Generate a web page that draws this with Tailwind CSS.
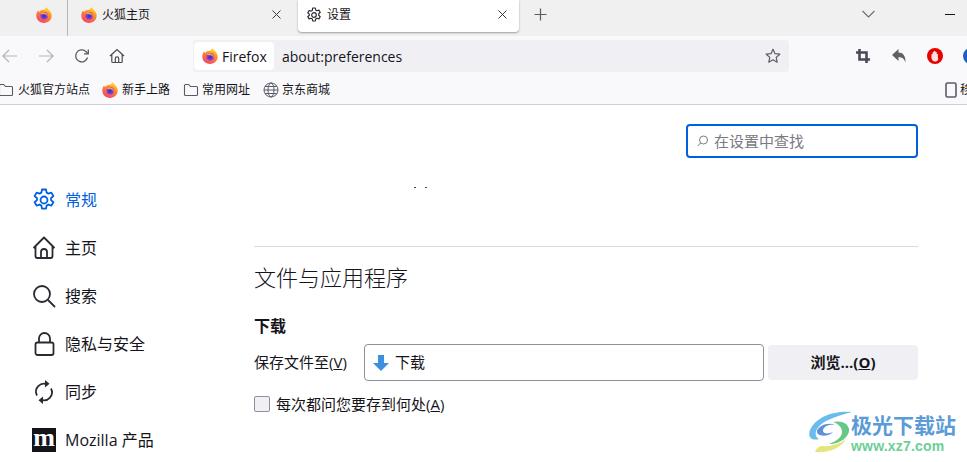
<!DOCTYPE html>
<html lang="zh-CN">
<head>
  <meta charset="UTF-8" />
  <title>设置</title>
  <script src="https://cdn.jsdelivr.net/npm/@tailwindcss/browser@4"></script>
</head>
<body class="relative w-[967px] h-[462px] overflow-hidden bg-white text-[#15141a] font-['Open_Sans','Noto_Sans_CJK_SC',sans-serif]">
  <svg class="absolute w-0 h-0">
    <defs>
      <linearGradient id="fxg" x1="0.75" y1="0" x2="0.25" y2="1">
        <stop offset="0" stop-color="#ffd23c"/><stop offset="0.4" stop-color="#ff8a2a"/><stop offset="1" stop-color="#f5406a"/>
      </linearGradient>
      <symbol id="fx" viewBox="0 0 16 16">
        <path d="M10.600 .2c.2 1.500 1.700 2 2.800 3.400 1.300 1.500 2.300 3.200 2.300 5 0 4.200-3.400 7.400-7.700 7.400S.3 12.800.3 8.600C.3 6.600 1 4.700 2.200 3.400c.2.800.5 1.300 1 1.600C4.400 3.500 6.300 2.700 8 2.900 8.900 2.200 10.100 1.500 10.600 .2z" fill="url(#fxg)"/>
        <path d="M10.600 .2c.2 1.500 1.700 2 2.800 3.400.9 1 1.600 2.200 2 3.400-1.200-1.900-3-3-5-3.400-.9-.2-1.700-.4-2.400-.7.900-.7 2.100-1.400 2.600-2.700z" fill="#ffc928"/>
        <circle cx="8.200" cy="8.700" r="3.700" fill="#7a3fe0"/>
        <path d="M4.200 6.200c1.800-1.300 4.800-1.300 6.500.3 1 1 1.500 2.300 1.300 3.500-.6-1.800-1.900-2.800-3.700-2.800-1.500 0-3.100-.1-4.100-1z" fill="#ffa030"/>
        <circle cx="8.100" cy="9.100" r="1.700" fill="#4a2fb5"/>
      </symbol>
      <symbol id="folder" viewBox="0 0 16 16">
        <path d="M1.500 12.500v-9a1 1 0 0 1 1-1h3.200l1.800 2h6a1 1 0 0 1 1 1v7a1 1 0 0 1-1 1h-11a1 1 0 0 1-1-1z" fill="none" stroke="#5b5b66" stroke-width="1.100"/>
      </symbol>
    </defs>
  </svg>

  <!-- 标签栏 -->
  <div class="flex h-[36px] bg-[#f0f0f0]">
    <div class="w-[68px] flex items-center justify-end pr-[15px] pb-[7px] border-r border-[#b8b8b8]">
      <svg class="w-4 h-4"><use href="#fx"/></svg>
    </div>
    <div class="w-[230px] flex items-center pl-[13px] pr-[17px] pb-[7px] text-[12px]">
      <svg class="w-4 h-4 mr-[5px]"><use href="#fx"/></svg>
      <span class="flex-1">火狐主页</span>
      <svg class="w-[9px] h-[9px]" viewBox="0 0 9 9" fill="none" stroke="#3b3b42" stroke-width="1"><path d="M.5.500l8 8M8.500.500l-8 8"/></svg>
    </div>
    <div class="w-[221px] h-[32px] flex items-center pl-[8px] pr-[12px] pb-[3px] text-[12px] bg-white rounded-b-[4px] shadow-[0_1px_2px_rgba(0,0,0,0.35)]">
      <svg class="w-4 h-4 mr-[5px]" viewBox="0 0 16 16" fill="none" stroke="#2b2a33" stroke-width="1.200"><circle cx="8" cy="8" r="2.300"/><path d="M6.700 1h2.600l.4 2 1.200.7 2-.6 1.300 2.200-1.500 1.400v1.600l1.500 1.400-1.300 2.200-2-.6-1.200.7-.4 2H6.700l-.4-2-1.200-.7-2 .6-1.300-2.200 1.500-1.400V7.100L1.800 5.700l1.300-2.200 2 .6 1.200-.7z" stroke-linejoin="round"/></svg>
      <span class="flex-1">设置</span>
      <svg class="w-[9px] h-[9px]" viewBox="0 0 9 9" fill="none" stroke="#3b3b42" stroke-width="1"><path d="M.5.500l8 8M8.500.500l-8 8"/></svg>
    </div>
    <div class="flex-1 flex items-center pl-[15px] pb-[8px]">
      <svg class="w-[13px] h-[13px] shrink-0" viewBox="0 0 13 13" stroke="#5b5b66" stroke-width="1.200"><path d="M6.500.5v12M.5 6.500h12"/></svg>
      <svg class="w-[13px] h-[8px] ml-[315px] shrink-0" viewBox="0 0 13 8" fill="none" stroke="#6a6a70" stroke-width="1.100"><path d="M.5 1l6 6 6-6"/></svg>
      <div class="w-[10px] h-px bg-[#15141a] ml-[70px] shrink-0"></div>
    </div>
  </div>

  <!-- 工具栏 -->
  <div class="h-[69px] pt-[4px] bg-[#f9f9fb] border-b border-[#cfcfd8] overflow-hidden">
    <div class="flex items-center h-[32px]">
      <svg class="w-[16px] h-[16px] ml-[2px] shrink-0" viewBox="0 0 16 16" fill="none" stroke="#b4b4bb" stroke-width="1.200"><path d="M15 8H1M7 2 1 8l6 6"/></svg>
      <svg class="w-[16px] h-[16px] ml-[20px] shrink-0" viewBox="0 0 16 16" fill="none" stroke="#b4b4bb" stroke-width="1.200"><path d="M1 8h14M9 2l6 6-6 6"/></svg>
      <svg class="w-[16px] h-[16px] ml-[20px] shrink-0" viewBox="0 0 16 16" fill="none" stroke="#5b5b66" stroke-width="1.300"><path d="M13.500 9.500A6 6 0 1 1 11.500 3.200L14 5.500"/><path d="M14.300 1.500v4.300H10" /></svg>
      <svg class="w-[16px] h-[16px] ml-[19px] shrink-0" viewBox="0 0 16 16" fill="none" stroke="#4a4a52" stroke-width="1.200"><path d="M1 8 8 1.500 15 8M2.800 6.500v7a1 1 0 0 0 1 1h8.400a1 1 0 0 0 1-1v-7M6.300 14.500v-4a1.700 1.700 0 0 1 3.400 0v4"/></svg>
      <div class="ml-[68px] w-[596px] h-[32px] flex items-center shrink-0 bg-[#f0f0f4] rounded-[4px] text-[14px]">
        <div class="flex items-center h-[28px] ml-[1px] w-[80px] pl-[8px] bg-white rounded-[4px]">
          <svg class="w-4 h-4 mr-[4px]"><use href="#fx"/></svg>Firefox
        </div>
        <span class="ml-[8px] flex-1">about:preferences</span>
        <svg class="w-[16px] h-[16px] mr-[8px]" viewBox="0 0 16 16" fill="none" stroke="#5b5b66" stroke-width="1.200" stroke-linejoin="round"><path d="m8 1.200 2 4.500 4.800.5-3.600 3.200 1 4.800L8 11.800l-4.200 2.400 1-4.800L1.200 6.200 6 5.700z"/></svg>
      </div>
      <svg class="w-[14px] h-[14px] ml-[67px] shrink-0" viewBox="0 0 14 14" fill="none" stroke="#4a4a55" stroke-width="2.600"><path d="M3.500 0v10.500H14M0 3.500h10.500V14"/></svg>
      <svg class="w-[14px] h-[14px] ml-[22px] shrink-0" viewBox="0 0 14 14" fill="#5f5f68"><path d="M6.500 0v3.600c4.300.1 7.300 3 7 9.900C12.400 10.300 10.500 8 6.500 8.300V12L0 6z"/></svg>
      <svg class="w-[16px] h-[16px] ml-[21px] shrink-0" viewBox="0 0 16 16"><circle cx="8" cy="8" r="8" fill="#e60000"/><path d="M4.500 8V6.500c0-1 1-1 1.200-.2V4.400c0-1 1.200-1 1.300 0V3.500c0-1 1.300-1 1.400 0v.9c0-1 1.300-1 1.300 0v2c0-.8 1.200-.8 1.200.1v3C11.900 12 10.200 13.500 8 13.500 6 13.500 5 12 4.500 10.500z" fill="#fbe3e3"/></svg>
      <div class="ml-[20px] w-[16px] h-[16px] rounded-full border-[4px] border-[#1f5fbf] bg-white shrink-0"></div>
    </div>

    <div class="flex items-center h-[28px] mt-[4px] text-[12px] whitespace-nowrap">
      <svg class="w-[16px] h-[16px] -ml-[2px] mr-[4px] shrink-0"><use href="#folder"/></svg>
      <span>火狐官方站点</span>
      <svg class="w-4 h-4 ml-[12px] mr-[4px] shrink-0"><use href="#fx"/></svg>
      <span>新手上路</span>
      <svg class="w-[16px] h-[16px] ml-[13px] mr-[3px] shrink-0"><use href="#folder"/></svg>
      <span>常用网址</span>
      <svg class="w-[16px] h-[16px] ml-[13px] mr-[3px] shrink-0" viewBox="0 0 16 16" fill="none" stroke="#5b5b66" stroke-width="1"><circle cx="8" cy="8" r="7"/><ellipse cx="8" cy="8" rx="3" ry="7"/><path d="M1 8h14M2 4.500h12M2 11.500h12"/></svg>
      <span>京东商城</span>
      <svg class="w-[12px] h-[16px] ml-[615px] mr-[3px] shrink-0" viewBox="0 0 12 16" fill="none" stroke="#5b5b66" stroke-width="1.600"><rect x="1" y="1" width="10" height="14" rx="1.500"/></svg>
      <span>移动设备</span>
    </div>
  </div>

  <!-- 设置页 -->
  <div class="flex">
    <nav class="w-[254px] pl-[32px] pt-[71px] text-[16px] shrink-0">
      <div class="flex items-center h-[48px] text-[#0061e0]">
        <svg class="w-[24px] h-[24px] mr-[9px]" viewBox="0 0 24 24" fill="none" stroke="#0061e0" stroke-width="1.800" stroke-linejoin="round"><circle cx="12" cy="12" r="3.500"/><path d="M10 1.500h4l.6 3.100 1.800 1 3-1 2 3.400-2.400 2.100v2l2.400 2.100-2 3.400-3-1-1.800 1-.6 3.100h-4l-.6-3.100-1.800-1-3 1-2-3.400 2.400-2.100v-2L2.600 8l2-3.400 3 1 1.800-1z"/></svg>
        常规
      </div>
      <div class="flex items-center h-[48px]">
        <svg class="w-[24px] h-[24px] mr-[9px]" viewBox="0 0 24 24" fill="none" stroke="#2b2a33" stroke-width="1.800" stroke-linejoin="round"><path d="M1.500 12 12 1.500 22.500 12M3.500 10v10a2 2 0 0 0 2 2h13a2 2 0 0 0 2-2V10M9 22v-6a3 3 0 0 1 6 0v6"/></svg>
        主页
      </div>
      <div class="flex items-center h-[48px]">
        <svg class="w-[24px] h-[24px] mr-[9px]" viewBox="0 0 24 24" fill="none" stroke="#2b2a33" stroke-width="1.800"><circle cx="10" cy="10" r="8"/><path d="m16 16 7 7"/></svg>
        搜索
      </div>
      <div class="flex items-center h-[48px]">
        <svg class="w-[24px] h-[24px] mr-[9px]" viewBox="0 0 24 24" fill="none" stroke="#2b2a33" stroke-width="1.800"><rect x="3.500" y="10.500" width="18" height="12.500" rx="2"/><path d="M7 10.500V6.500a5.500 5.500 0 0 1 11 0v4"/></svg>
        隐私与安全
      </div>
      <div class="flex items-center h-[48px]">
        <svg class="w-[24px] h-[24px] mr-[9px]" viewBox="0 0 24 24" fill="none" stroke="#2b2a33" stroke-width="1.800"><path d="M5 15.500A8 8 0 0 1 15.500 4.500M19 8.500A8 8 0 0 1 8.500 19.500"/><path d="M13 0v7.500l4.500-3.700zM11 24v-7.500l-4.500 3.700z" fill="#2b2a33" stroke="none"/></svg>
        同步
      </div>
      <div class="flex items-center h-[48px]">
        <div class="w-[24px] h-[24px] mr-[9px] flex items-center justify-center bg-[#15141a] text-white font-['Liberation_Serif',serif] font-bold text-[26px] leading-[22px] pb-[5px]">m</div>
        Mozilla 产品
      </div>
    </nav>

    <main class="w-[664px]">
      <div class="flex justify-end pt-[19px]">
        <div class="w-[232px] h-[34px] flex items-center pl-[9px] border-2 border-[#0061e0] rounded-[4px] text-[15px] text-[#7a7a82]">
          <svg class="w-[12px] h-[12px] mr-[5px]" viewBox="0 0 12 12" fill="none" stroke="#7a7a82" stroke-width="1"><circle cx="6.500" cy="5" r="4"/><path d="M3.500 8 .8 11"/></svg>
          在设置中查找
        </div>
      </div>
      <div class="h-[89px] pt-[29px] pl-[160px] flex items-start gap-[9px] border-b border-[#d8d8dd]">
        <div class="w-[2px] h-px bg-[#3b3b42]"></div>
        <div class="w-[2px] h-px bg-[#3b3b42]"></div>
      </div>
      <h1 class="mt-[14px] text-[22px] leading-[32px] font-light">文件与应用程序</h1>
      <h2 class="mt-[21px] text-[16px] leading-[24px] font-bold">下载</h2>
      <div class="flex items-center mt-[6px] text-[15px]">
        <span class="w-[110px] whitespace-nowrap">保存文件至(<u>V</u>)</span>
        <div class="w-[400px] h-[37px] flex items-center pl-[8px] border border-[#8f8f9d] rounded-[4px]">
          <svg class="w-[16px] h-[16px] mr-[6px]" viewBox="0 0 16 16" fill="#3d8fdf"><path d="M5 0h6v8h5l-8 8-8-8h5z"/></svg>
          下载
        </div>
        <div class="ml-[4px] w-[150px] h-[35px] flex items-center justify-center bg-[#f0f0f4] rounded-[4px] font-bold">浏览...(<u>O</u>)</div>
      </div>
      <label class="flex items-center mt-[12px] text-[15px]">
        <span class="w-[16px] h-[16px] mr-[6px] bg-[#f0f0f4] border border-[#8f8f9d] rounded-[2px]"></span>
        每次都问您要存到何处(<u>A</u>)
      </label>
    </main>
  </div>

  <!-- 水印 -->
  <div class="absolute left-[808px] top-[411px] flex items-start">
    <svg class="w-[44px] h-[42px]" viewBox="0 0 44 42" fill="none">
      <path d="M44 1C28-1 8 5 2 19c-3 8 3 11 9 9C5 25 7 16 18 10 26 6 36 3 44 1z" fill="#6bbcec"/>
      <path d="M9 20c2-6 12-9 18-6-7-1-12 2-12 6 0 3 6 3 10 1-4 5-17 5-16-1z" fill="#5d93d6"/>
      <path d="M25 11c8-2 15 1 16 7 1 7-8 15-20 15 8-3 13-7 13-12 0-4-3-8-9-10z" fill="#66c884"/>
      <path d="M7 41c14 1 26-4 31-13-5 4-14 8-24 7-3 0-6 3-7 6z" fill="#e4e67a"/>
    </svg>
    <div class="-ml-[1px]">
      <div class="text-[21px] leading-[26px] font-bold text-[#5b9bd8] font-['Noto_Sans_CJK_SC',sans-serif]">极光下载站</div>
      <div class="text-[14px] leading-[18px] font-bold text-[#6ccf95] font-['Liberation_Sans',sans-serif] tracking-[0.2px]">www.xz7.com</div>
    </div>
  </div>
</body>
</html>
